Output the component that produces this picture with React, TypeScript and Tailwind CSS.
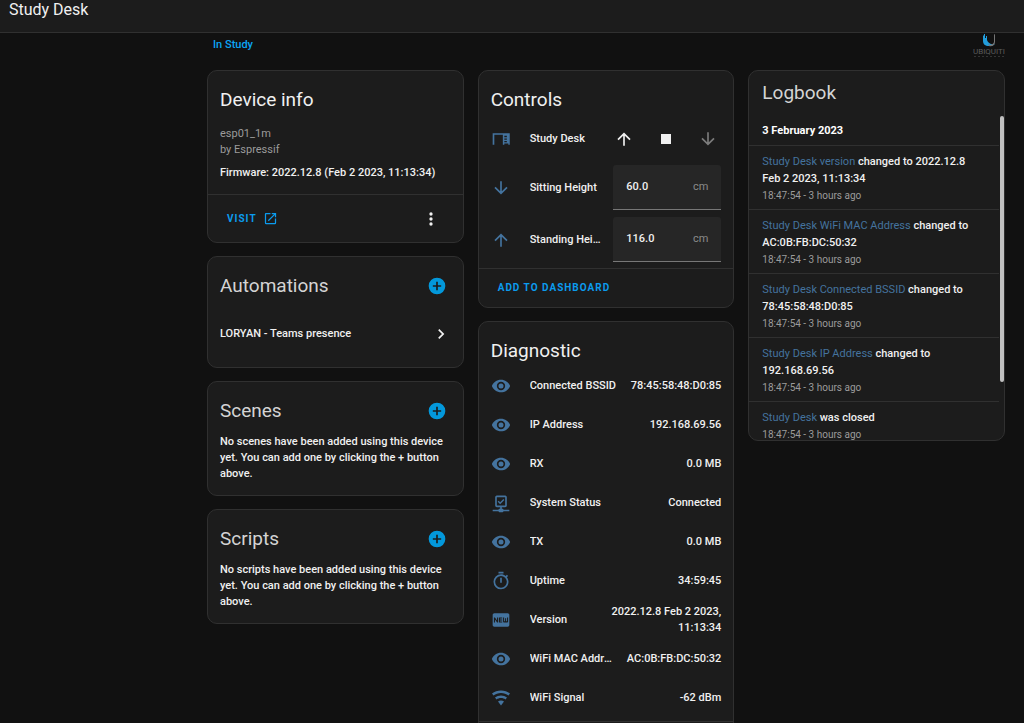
import type { ReactNode } from "react";
import { MdFiberNew } from "react-icons/md";

const paths = {
  eye: "M12,9A3,3 0 0,0 9,12A3,3 0 0,0 12,15A3,3 0 0,0 15,12A3,3 0 0,0 12,9M12,17A5,5 0 0,1 7,12A5,5 0 0,1 12,7A5,5 0 0,1 17,12A5,5 0 0,1 12,17M12,4.5C7,4.5 2.73,7.61 1,12C2.73,16.39 7,19.5 12,19.5C17,19.5 21.27,16.39 23,12C21.27,7.61 17,4.5 12,4.5Z",
  desk: "M2,5H22.5V19H20.8V17.5H16V19H14.2V7H4V19H2V5M16,8V10H19V8H16M16,11.5V13H19V11.5H16M16,14.5V16H19V14.5H16Z",
  up: "M13,20H11V8L5.5,13.5L4.08,12.08L12,4.16L19.92,12.08L18.5,13.5L13,8V20Z",
  down: "M11,4H13V16L18.5,10.5L19.92,11.92L12,19.84L4.08,11.92L5.5,10.5L11,16V4Z",
  stop: "M18,18H6V6H18V18Z",
  plusCircle: "M17,13H13V17H11V13H7V11H11V7H13V11H17M12,2A10,10 0 0,0 2,12A10,10 0 0,0 12,22A10,10 0 0,0 22,12A10,10 0 0,0 12,2Z",
  chevron: "M8.59,16.58L13.17,12L8.59,7.41L10,6L16,12L10,18L8.59,16.58Z",
  dots: "M12,16A2,2 0 0,1 14,18A2,2 0 0,1 12,20A2,2 0 0,1 10,18A2,2 0 0,1 12,16M12,10A2,2 0 0,1 14,12A2,2 0 0,1 12,14A2,2 0 0,1 10,12A2,2 0 0,1 12,10M12,4A2,2 0 0,1 14,6A2,2 0 0,1 12,8A2,2 0 0,1 10,6A2,2 0 0,1 12,4Z",
  open: "M14,3V5H17.59L7.76,14.83L9.17,16.24L19,6.41V10H21V3M19,19H5V5H12V3H5C3.89,3 3,3.9 3,5V19A2,2 0 0,0 5,21H19A2,2 0 0,0 21,19V12H19V19Z",
  timer: "M12,20A7,7 0 0,1 5,13A7,7 0 0,1 12,6A7,7 0 0,1 19,13A7,7 0 0,1 12,20M19.03,7.39L20.45,5.97C20,5.46 19.55,5 19.04,4.56L17.62,6C16.07,4.74 14.12,4 12,4A9,9 0 0,0 3,13A9,9 0 0,0 12,22C17,22 21,17.97 21,13C21,10.88 20.26,8.93 19.03,7.39M11,14H13V8H11M15,1H9V3H15V1Z",
  network: "M15,20A1,1 0 0,0 14,19H13V17H17A2,2 0 0,0 19,15V5A2,2 0 0,0 17,3H7A2,2 0 0,0 5,5V15A2,2 0 0,0 7,17H11V19H10A1,1 0 0,0 9,20H2V22H9A1,1 0 0,0 10,23H14A1,1 0 0,0 15,22H22V20H15M7,15V5H17V15H7M11,13.5L8,10.5L9.2,9.3L11,11.1L14.8,7.3L16,8.5L11,13.5Z",
  wifi: "M12,21L15.6,16.2C14.6,15.45 13.35,15 12,15C10.65,15 9.4,15.45 8.4,16.2L12,21M12,3C7.95,3 4.21,4.34 1.2,6.6L3,9C5.5,7.12 8.62,6 12,6C15.38,6 18.5,7.12 21,9L22.8,6.6C19.79,4.34 16.05,3 12,3M12,9C9.3,9 6.81,9.89 4.8,11.4L6.6,13.8C8.1,12.67 9.97,12 12,12C14.03,12 15.9,12.67 17.4,13.8L19.2,11.4C17.19,9.89 14.7,9 12,9Z",
};

type IconName = keyof typeof paths;

function Icon({ name, className = "size-5" }: { name: IconName; className?: string }) {
  return (
    <svg viewBox="0 0 24 24" fill="currentColor" className={`shrink-0 ${className}`} aria-hidden="true">
      <path d={paths[name]} />
    </svg>
  );
}

const diagnostics: { icon: IconName | "new"; name: string; value: string }[] = [
  { icon: "eye", name: "Connected BSSID", value: "78:45:58:48:D0:85" },
  { icon: "eye", name: "IP Address", value: "192.168.69.56" },
  { icon: "eye", name: "RX", value: "0.0 MB" },
  { icon: "network", name: "System Status", value: "Connected" },
  { icon: "eye", name: "TX", value: "0.0 MB" },
  { icon: "timer", name: "Uptime", value: "34:59:45" },
  { icon: "new", name: "Version", value: "2022.12.8 Feb 2 2023, 11:13:34" },
  { icon: "eye", name: "WiFi MAC Address", value: "AC:0B:FB:DC:50:32" },
  { icon: "wifi", name: "WiFi Signal", value: "-62 dBm" },
];

const logEntries = [
  { name: "Study Desk version", text: "changed to 2022.12.8 Feb 2 2023, 11:13:34" },
  { name: "Study Desk WiFi MAC Address", text: "changed to AC:0B:FB:DC:50:32" },
  { name: "Study Desk Connected BSSID", text: "changed to 78:45:58:48:D0:85" },
  { name: "Study Desk IP Address", text: "changed to 192.168.69.56" },
  { name: "Study Desk", text: "was closed" },
];

const heights: { id: string; icon: IconName; label: string; value: string }[] = [
  { id: "sitting", icon: "down", label: "Sitting Height", value: "60.0" },
  { id: "standing", icon: "up", label: "Standing Height", value: "116.0" },
];

function Card({ children }: { children: ReactNode }) {
  return <section className="overflow-hidden rounded-[10px] border border-[#303030] bg-[#1c1c1c]">{children}</section>;
}

function ListCard({ title, children }: { title: string; children: ReactNode }) {
  return (
    <Card>
      <div className="flex items-center justify-between pt-[15px] pr-4 pl-3">
        <h2 className="text-[19px] leading-7 font-normal text-[#d4d4d4]">{title}</h2>
        <button aria-label={`Add to ${title}`} className="text-[#0398db]">
          <Icon name="plusCircle" />
        </button>
      </div>
      {children}
    </Card>
  );
}

function DashboardFooter() {
  return (
    <div className="border-t border-[#303030] px-[19px] py-[10px]">
      <button className="block text-[10px] leading-[18px] font-bold tracking-widest text-[#0b9bee]">ADD TO DASHBOARD</button>
    </div>
  );
}

function BrandLogo() {
  return (
    <svg viewBox="0 0 34 26" className="h-[26px] w-[34px]" role="img" aria-label="Ubiquiti Networks">
      <path d="M12 2V8C12 11 14 13 18 13C21 13 23 12 24 11C20 12 17 10 16 7V3H15V5H14V1H13V3Z" fill="#229ddb" />
      <path d="M17 10C18 13 22 12 23 9V1C24 1 24 2 24 3V9C24 12 21 14 18 13Z" fill="#777" />
      <text x="18" y="21" textAnchor="middle" fontFamily="Roboto, sans-serif" fontSize="8" fontWeight="400" fill="#5b5b5b">UBIQUITI</text>
      <path d="M3 23.500H33" stroke="#343434" strokeWidth="1" strokeDasharray="2 2" />
    </svg>
  );
}

export default function App() {
  return (
    <div className="h-screen overflow-hidden bg-[#111111] font-['Roboto',sans-serif] text-[11px] leading-4 font-medium text-[#f0f0f0]">
      <header className="border-b border-[#303030] bg-[#1c1c1c] px-[9px] pb-3">
        <h1 className="text-base leading-5 font-normal">Study Desk</h1>
      </header>

      <main className="pr-[19px] pl-[207px]">
        <div className="flex h-[37px] items-start justify-between pl-[6px]">
          <a href="#study" className="pt-1 text-[#0ba5f5]">In Study</a>
          <BrandLogo />
        </div>

        <div className="grid grid-cols-3 items-start gap-[14px]">
          <div className="flex flex-col gap-[13px]">
            <Card>
              <div className="px-3 pt-[15px] pb-[13px]">
                <h2 className="text-[19px] leading-7 font-normal">Device info</h2>
                <p className="mt-3 font-normal text-[#9b9b9b]">
                  esp01_1m
                  <br />
                  by Espressif
                </p>
                <p className="mt-[7px] whitespace-nowrap">Firmware: 2022.12.8 (Feb 2 2023, 11:13:34)</p>
              </div>
              <div className="flex h-[48px] items-center justify-between border-t border-[#303030] pr-[22px] pl-[19px]">
                <a href="#visit" className="flex items-center gap-[6px] text-[10px] font-bold tracking-widest text-[#0b9bee]">
                  VISIT
                  <Icon name="open" className="size-[15px]" />
                </a>
                <button aria-label="More options">
                  <Icon name="dots" />
                </button>
              </div>
            </Card>

            <ListCard title="Automations">
              <a href="#automation" className="mt-[14px] mb-[13px] flex h-10 items-center justify-between pr-3 pl-3">
                LORYAN - Teams presence
                <Icon name="chevron" />
              </a>
            </ListCard>

            <ListCard title="Scenes">
              <p className="px-3 pt-[9px] pb-[13px]">
                No scenes have been added using this device yet. You can add one by clicking the + button above.
              </p>
            </ListCard>

            <ListCard title="Scripts">
              <p className="px-3 pt-[9px] pb-[13px]">
                No scripts have been added using this device yet. You can add one by clicking the + button above.
              </p>
            </ListCard>
          </div>

          <div className="flex flex-col gap-[13px]">
            <Card>
              <h2 className="px-3 pt-[15px] text-[19px] leading-7 font-normal">Controls</h2>
              <div className="flex flex-col gap-[7px] px-3 pt-[5px] pb-[6px]">
                <div className="flex h-[39px] items-center">
                  <Icon name="desk" className="size-5 text-[#44739e]" />
                  <span className="ml-[19px] flex-1">Study Desk</span>
                  <div className="flex gap-[22px] pr-[3px]">
                    <button aria-label="Raise desk"><Icon name="up" /></button>
                    <button aria-label="Stop desk"><Icon name="stop" /></button>
                    <button aria-label="Lower desk" className="text-[#7b7b7b]" disabled><Icon name="down" /></button>
                  </div>
                </div>
                {heights.map((item) => (
                  <div key={item.id} className="flex items-center">
                    <Icon name={item.icon} className="size-5 text-[#44739e]" />
                    <label htmlFor={item.id} className="mr-[10px] ml-[19px] min-w-0 flex-1 truncate">{item.label}</label>
                    <div className="flex h-[45px] w-[108px] items-center rounded-t-[3px] border-b border-[#777] bg-[#262626] px-[13px]">
                      <input id={item.id} defaultValue={item.value} className="w-full min-w-0 bg-transparent outline-none" />
                      <span className="font-normal text-[#8a8a8a]">cm</span>
                    </div>
                  </div>
                ))}
              </div>
              <DashboardFooter />
            </Card>

            <Card>
              <h2 className="px-3 pt-[15px] text-[19px] leading-7 font-normal">Diagnostic</h2>
              <ul className="px-3 pt-px pb-1">
                {diagnostics.map((item) => (
                  <li key={item.name} className="flex h-[39px] items-center">
                    <span className="text-[#44739e]">
                      {item.icon === "new" ? <MdFiberNew className="size-5" /> : <Icon name={item.icon} />}
                    </span>
                    <span className="mr-[10px] ml-[19px] min-w-10 flex-1 truncate">{item.name}</span>
                    <span className="max-w-[120px] text-right">{item.value}</span>
                  </li>
                ))}
              </ul>
              <DashboardFooter />
            </Card>
          </div>

          <div className="relative">
            <Card>
              <div className="h-[369px] overflow-hidden">
                <h2 className="px-[13px] pt-2 pb-4 text-[19px] leading-7 font-normal text-[#d4d4d4]">Logbook</h2>
                <h3 className="px-[13px] pb-[6px] font-bold text-white">3 February 2023</h3>
                <ul className="mr-[5px]">
                  {logEntries.map((entry) => (
                    <li key={entry.name} className="border-t border-[#303030] pt-[7px] pr-4 pb-[5px] pl-[13px] leading-[17px]">
                      <a href="#entity" className="font-normal text-[#44739e]">{entry.name}</a> {entry.text}
                      <div className="text-[10px] leading-[17px] font-normal text-[#9b9b9b]">18:47:54 - 3 hours ago</div>
                    </li>
                  ))}
                </ul>
              </div>
            </Card>
            {/* scroll thumb */}
            <div className="absolute top-[46px] right-px h-[266px] w-1 rounded-sm bg-[#c1c1c1]" />
          </div>
        </div>
      </main>
    </div>
  );
}
